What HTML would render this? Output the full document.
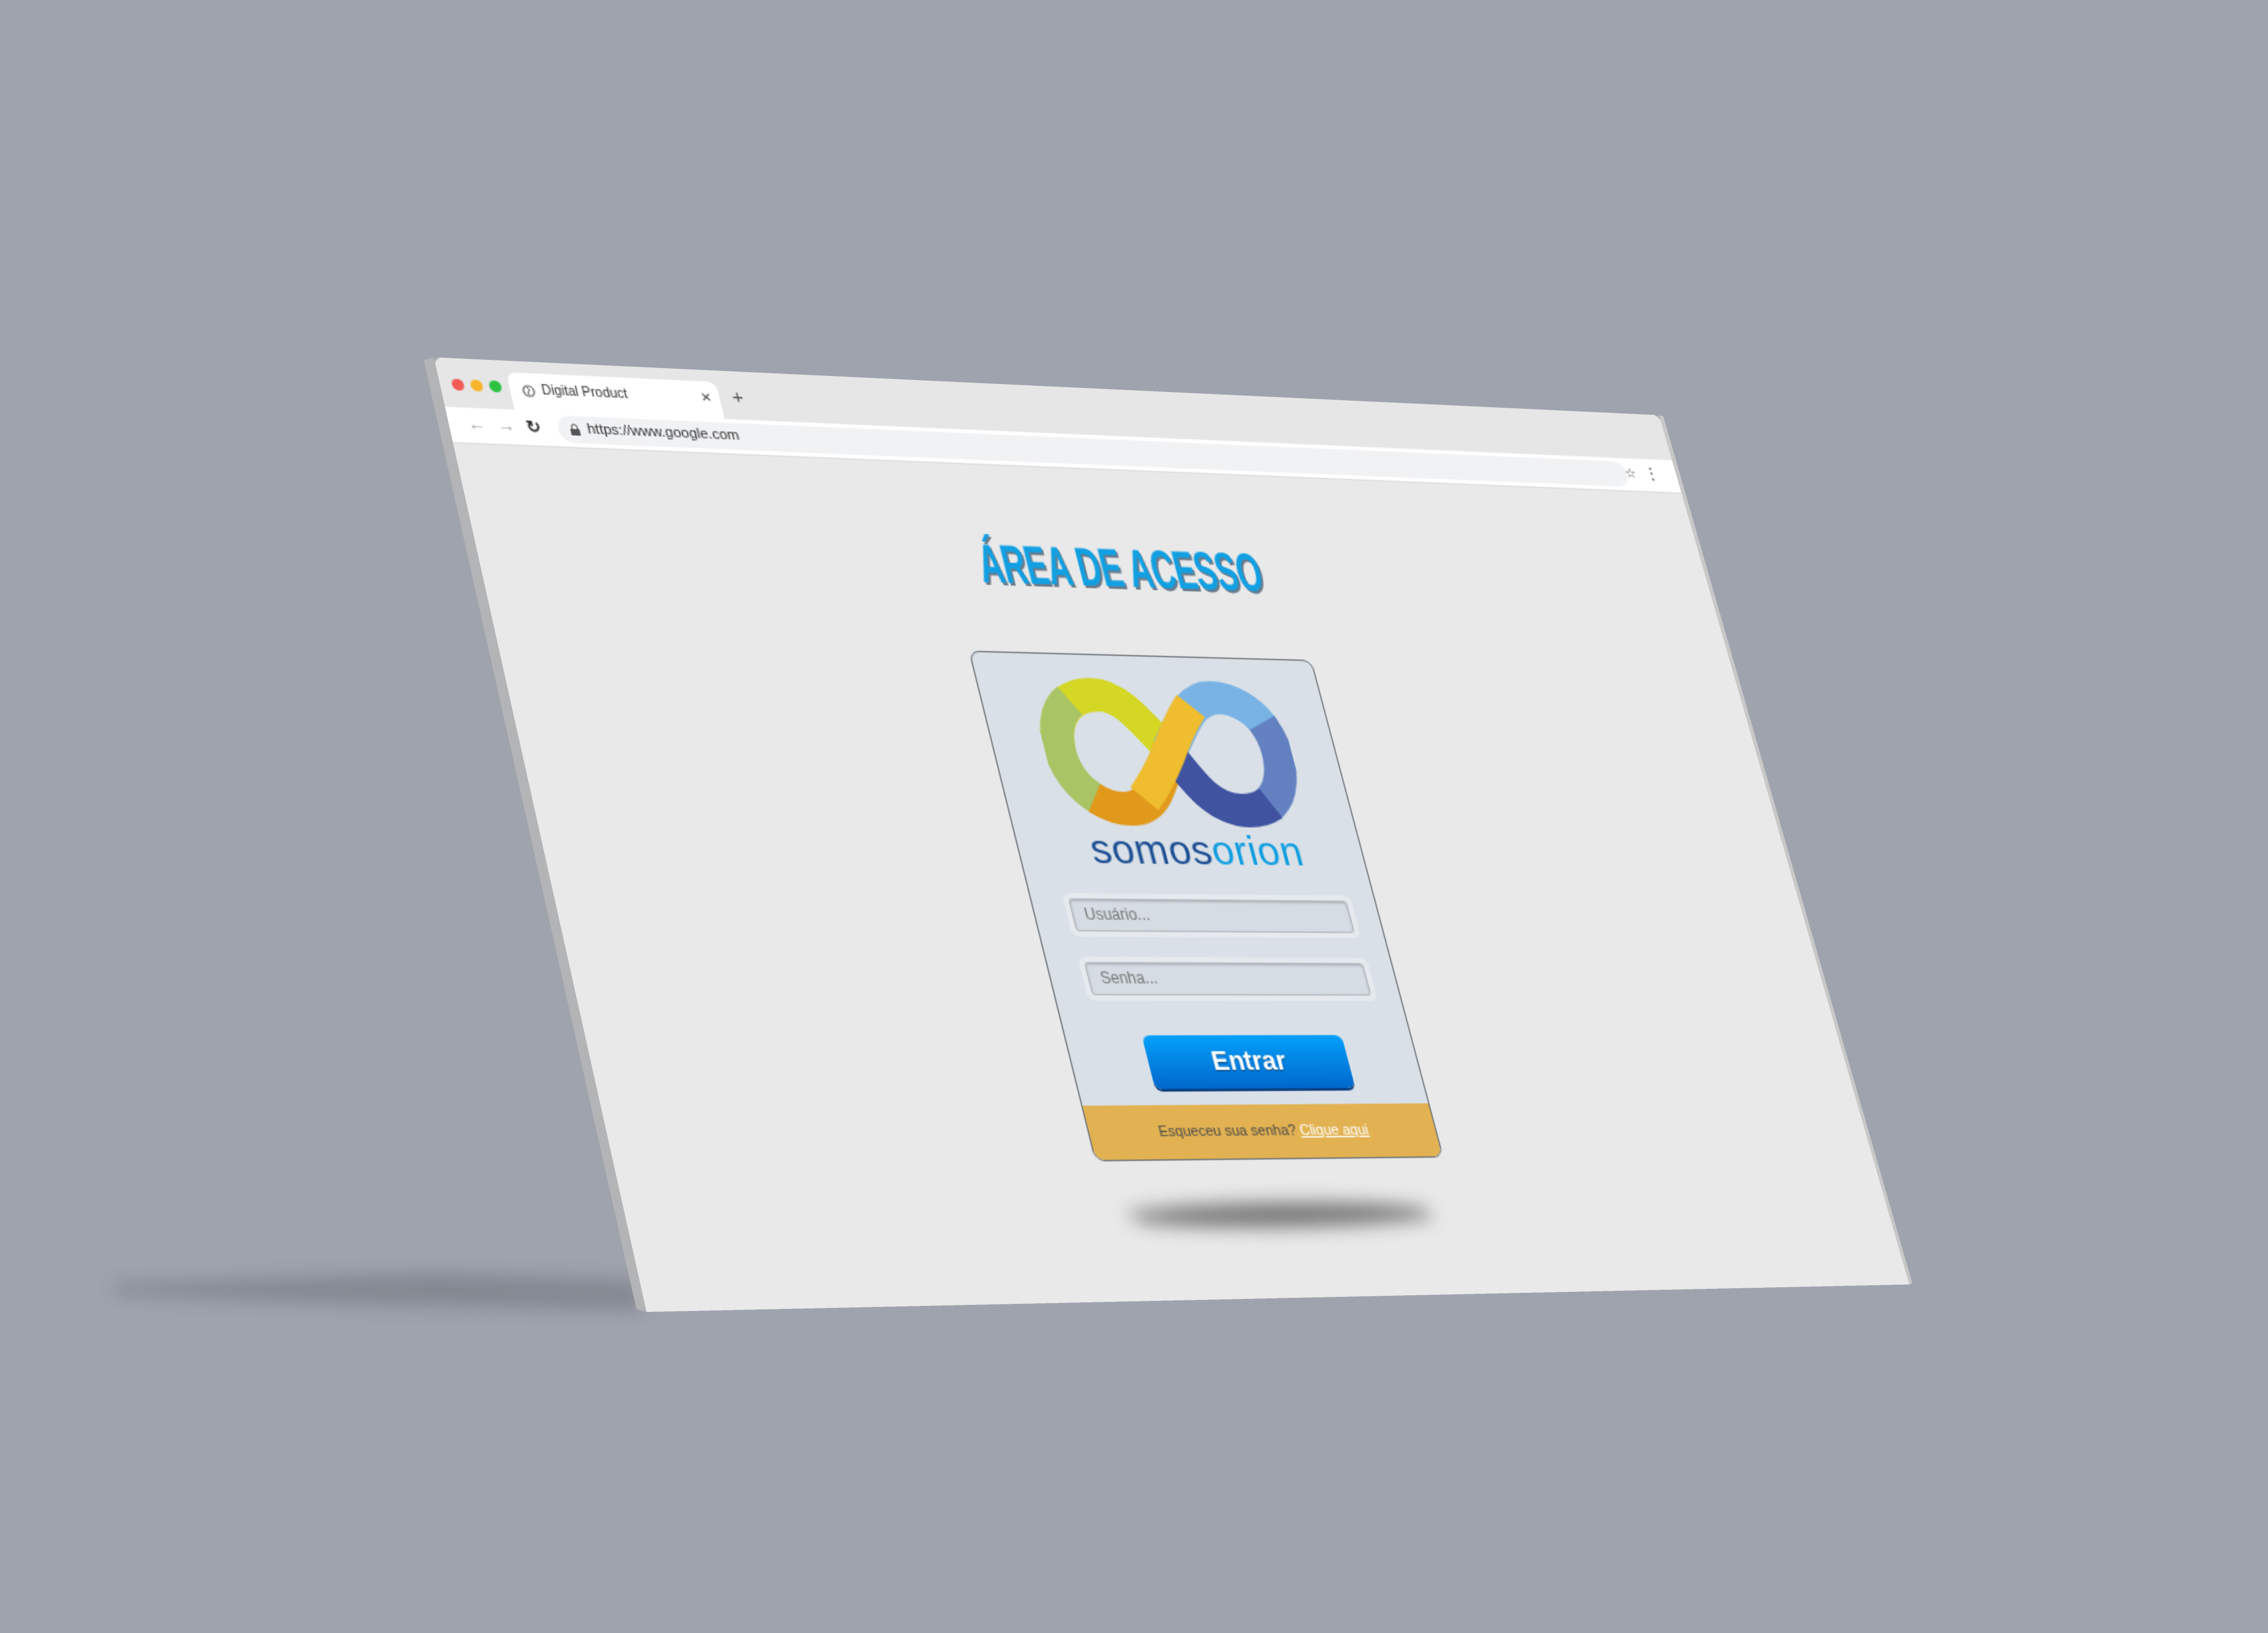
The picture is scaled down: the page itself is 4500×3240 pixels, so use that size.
<!DOCTYPE html>
<html><head><meta charset="utf-8">
<style>
html,body{margin:0;padding:0;}
body{width:4500px;height:3240px;background:#9fa3ad;overflow:hidden;position:relative;font-family:"Liberation Sans",sans-serif;}
#stage{position:absolute;left:0;top:0;width:1568px;height:1129px;transform:scale(2.86990);transform-origin:0 0;}
#bw{position:absolute;left:0;top:0;width:1000px;height:700px;transform-origin:0 0;
transform:matrix3d(0.95782,0.06773,0,0.00009662, 0.17876,0.87946,0,-0.0000699, 0,0,1,0, 300,247,0,1);
background:#e9e9e9;border-radius:6px 6px 0 0;overflow:hidden;}
.tabrow{position:absolute;left:0;top:0;width:1000px;height:38px;background:#e6e6e6;}
.dot{position:absolute;top:16px;width:9px;height:9px;border-radius:50%;}
.tab{position:absolute;left:52px;top:9px;width:160px;height:29px;background:#fff;border-radius:7px 7px 0 0;}
.tab .t{position:absolute;left:24px;top:8px;font-size:10px;color:#333;}
.tab .x{position:absolute;right:6px;top:8px;font-size:10px;color:#444;}
.plus{position:absolute;left:222px;top:12px;font-size:15px;color:#555;}
.addr{position:absolute;left:0;top:38px;width:1000px;height:27px;background:#fff;border-bottom:1px solid #ddd;}
.url{position:absolute;left:82px;top:3px;right:44px;height:21px;background:#f1f2f4;border-radius:10px;}
.url span{position:absolute;left:22px;top:4px;font-size:11px;color:#333;}
.ico{position:absolute;top:5px;font-size:13px;color:#999;}
#card{position:absolute;left:360px;top:213px;width:278px;height:385px;background:#d9e0e7;border:1px solid #6e7378;border-radius:8px;box-sizing:border-box;overflow:hidden;}
.inp{position:absolute;left:25px;width:232px;height:33px;border-radius:6px;background:#e6eaee;}
.inp div{position:absolute;left:4px;top:4px;right:4px;bottom:4px;background:#d5dce3;border:1px solid #b4b9bf;border-radius:3px;box-shadow:inset 0 1px 2px rgba(0,0,0,.2);font-size:12px;color:#777;line-height:23px;padding-left:9px;box-sizing:border-box;}
.btn{position:absolute;left:60px;top:291px;width:160px;height:40px;border-radius:6px;background:linear-gradient(#04a0fa,#0067cc);box-shadow:0 2px 0 #0a3f80;color:#fff;font-weight:bold;font-size:20px;text-align:center;line-height:40px;text-shadow:0 1px 1px rgba(0,0,0,.4);}
.foot{position:absolute;left:0;bottom:0;width:100%;height:40px;background:#e2b252;font-size:11px;color:#4a4a4a;text-align:center;line-height:40px;}
.foot u{color:#fff;}
</style></head><body>
<div id="stage">
<svg width="1568" height="1129" style="position:absolute;left:0;top:0">
<defs><filter id="b1" x="-20%" y="-200%" width="140%" height="500%"><feGaussianBlur stdDeviation="6"/></filter></defs>
<polygon points="80,888 300,880 440,885 445,906 250,902 80,895" fill="#4a4d55" opacity="0.3" filter="url(#b1)"/>
<polygon points="293,249 300,247 447,907 440,905" fill="#b3b4b6"/>
<polygon points="1147,287 1150,288 1322,887 1320,888" fill="#c8c8c8"/>
</svg>
<div id="bw">
  <div class="tabrow">
    <div class="dot" style="left:9px;background:#f25a55"></div>
    <div class="dot" style="left:23px;background:#f7b52c"></div>
    <div class="dot" style="left:37px;background:#2cc13f"></div>
    <div class="tab"><svg style="position:absolute;left:9px;top:9px" width="10" height="10" viewBox="0 0 10 10"><circle cx="5" cy="5" r="4" fill="none" stroke="#666" stroke-width="1.2"/><path d="M4 2 L6 4 L4 6 L5 8" stroke="#666" fill="none"/></svg><span class="t">Digital Product</span><span class="x">✕</span></div>
    <div class="plus">+</div>
  </div>
  <div class="addr">
    <span class="ico" style="left:14px">←</span>
    <span class="ico" style="left:36px">→</span>
    <span class="ico" style="left:58px;color:#333;font-weight:bold">↻</span>
    <div class="url"><svg style="position:absolute;left:9px;top:6px" width="7" height="9" viewBox="0 0 7 9"><rect x="0" y="4" width="7" height="5" fill="#555"/><path d="M1.5 4 V2.5 a2 2 0 0 1 4 0 V4" stroke="#555" fill="none"/></svg><span>https://www.google.com</span></div>
    <span style="position:absolute;right:36px;top:6px;font-size:11px;color:#555">☆</span>
    <span style="position:absolute;right:16px;top:5px;font-size:12px;color:#555">⋮</span>
  </div>
  <div style="position:absolute;left:300px;top:121px;width:400px;text-align:center;font-family:'Liberation Sans Narrow','Liberation Sans',sans-serif;font-weight:bold;font-size:43px;color:#12a0e2;letter-spacing:-1px;transform:scaleX(0.62);text-shadow:2px 2px 0 #6b7a8a;">ÁREA DE ACESSO</div>
  <div style="position:absolute;left:375px;top:630px;width:242px;height:18px;border-radius:50%;background:rgba(40,40,40,.6);filter:blur(7px)"></div>
  <div id="card">
    <svg style="position:absolute;left:40px;top:16px" width="200" height="116" viewBox="0 0 200 116">
      <g fill="none" stroke-width="26">
        <path d="M100 58 C80 30 70 15 52 15 C25 15 12 35 12 58" stroke="#d4d723"/>
        <path d="M30 20 C18 28 12 42 12 58 C12 75 20 88 32 96" stroke="#a9c464"/>
        <path d="M30 95 C40 102 47 103 55 103 C75 103 85 85 100 58" stroke="#e0991b"/>
        <path d="M100 58 C120 30 130 15 148 15 C165 15 178 25 184 38" stroke="#79b3e5"/>
        <path d="M182 34 C186 42 188 50 188 58 C188 78 180 92 168 99" stroke="#6381c0"/>
        <path d="M172 97 C165 101 157 103 150 103 C125 103 115 85 100 58" stroke="#3f53a0"/>
        <path d="M70 95 C85 80 92 70 100 58 C108 45 115 35 127 22" stroke="#efbd2e" stroke-width="25"/>
      </g>
    </svg>
    <div style="position:absolute;left:4px;top:132px;width:100%;text-align:center;font-size:32px;letter-spacing:0.5px;"><span style="color:#1d4f94">somos</span><span style="color:#109ee0">orion</span></div>
    <div class="inp" style="top:184px"><div>Usuário...</div></div>
    <div class="inp" style="top:232px"><div>Senha...</div></div>
    <div class="btn">Entrar</div>
    <div class="foot">Esqueceu sua senha? <u>Clique aqui</u></div>
  </div>
</div>
</div>
</body></html>
